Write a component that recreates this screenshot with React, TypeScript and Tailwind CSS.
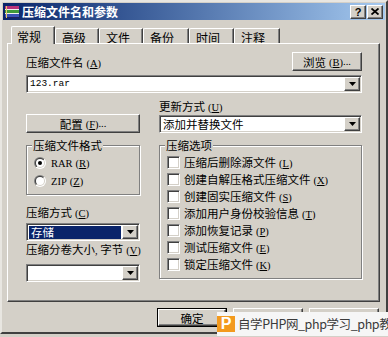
import React from "react";

const raised =
  "border border-t-white border-l-white border-r-[#404040] border-b-[#404040] shadow-[inset_-1px_-1px_0_#808080]";
const sunken =
  "border border-t-[#808080] border-l-[#808080] border-r-white border-b-white shadow-[inset_1px_1px_0_#404040,inset_-1px_-1px_0_#d4d0c8]";

function Lat({ children }: { children: React.ReactNode }) {
  return <span className="font-['Liberation_Serif'] text-[10.5px]">{children}</span>;
}

function Mn({ k }: { k: string }) {
  return (
    <span className="ml-[3px]">
      <Lat>
        (<u>{k}</u>)
      </Lat>
    </span>
  );
}

function Tri() {
  return (
    <svg width="7" height="4" viewBox="0 0 7 4">
      <polygon points="0,0 7,0 3.5,4" fill="#000" />
    </svg>
  );
}

function Combo({ text, sel, mono }: { text?: string; sel?: boolean; mono?: boolean }) {
  return (
    <div className={`flex h-[18px] w-full p-[1px] bg-white ${sunken}`}>
      <div className="flex-1 flex items-center overflow-hidden">
        {sel ? (
          <span className="ml-[1px] mr-[1px] flex-1 h-[13px] leading-[13px] bg-[#0a246a] text-white pl-[2px]">
            {text}
          </span>
        ) : mono ? (
          <span className="pl-[2px] font-['Liberation_Mono'] text-[9.5px]">{text}</span>
        ) : (
          <span className="pl-[2px]">{text}</span>
        )}
      </div>
      <div className={`w-[16px] h-full flex items-center justify-center bg-[#d4d0c8] ${raised}`}>
        <Tri />
      </div>
    </div>
  );
}

function Btn({ children, className = "", def }: { children: React.ReactNode; className?: string; def?: boolean }) {
  if (def) {
    return (
      <div className={`border border-black ${className}`}>
        <div className={`w-full h-full flex items-center justify-center ${raised}`}>{children}</div>
      </div>
    );
  }
  return <div className={`flex items-center justify-center ${raised} ${className}`}>{children}</div>;
}

function Radio({ on }: { on?: boolean }) {
  return (
    <svg width="12" height="12" viewBox="0 0 12 12">
      <defs>
        <linearGradient id="rgo" x1="0" y1="0" x2="1" y2="1">
          <stop offset="0.5" stopColor="#808080" />
          <stop offset="0.5" stopColor="#ffffff" />
        </linearGradient>
        <linearGradient id="rgi" x1="0" y1="0" x2="1" y2="1">
          <stop offset="0.5" stopColor="#404040" />
          <stop offset="0.5" stopColor="#d4d0c8" />
        </linearGradient>
      </defs>
      <circle cx="6" cy="6" r="6" fill="url(#rgo)" />
      <circle cx="6" cy="6" r="5" fill="url(#rgi)" />
      <circle cx="6" cy="6" r="4" fill="#fff" />
      {on && <circle cx="6" cy="6" r="2" fill="#000" />}
    </svg>
  );
}

function Check() {
  return <div className={`w-[13px] h-[13px] bg-white shrink-0 ${sunken}`} />;
}

function Group({ title, className = "", children }: { title: string; className?: string; children: React.ReactNode }) {
  return (
    <div className={`mt-[7px] flex flex-col border border-[#808080] shadow-[1px_1px_0_#fff,inset_1px_1px_0_#fff] ${className}`}>
      <span className="-mt-[8px] ml-[5px] px-[1px] w-fit leading-[14px] bg-[#d4d0c8]">{title}</span>
      {children}
    </div>
  );
}

function RarIcon() {
  return (
    <svg width="16" height="16" viewBox="0 0 16 16">
      <rect x="1" y="2" width="14" height="3" fill="#b8327a" />
      <rect x="1" y="5" width="14" height="1" fill="#f0f0f0" />
      <rect x="1" y="6" width="14" height="3" fill="#3f9a3c" />
      <rect x="1" y="9" width="14" height="1" fill="#f0f0f0" />
      <rect x="1" y="10" width="14" height="3" fill="#3a52b8" />
      <rect x="1" y="13" width="14" height="1" fill="#202060" />
      <rect x="2" y="2" width="1" height="12" fill="#e8c86a" />
    </svg>
  );
}

const tabs: [string, number][] = [
  ["常规", 44],
  ["高级", 44],
  ["文件", 44],
  ["备份", 46],
  ["时间", 45],
  ["注释", 46],
];

const options: [string, string][] = [
  ["压缩后删除源文件", "L"],
  ["创建自解压格式压缩文件", "X"],
  ["创建固实压缩文件", "S"],
  ["添加用户身份校验信息", "T"],
  ["添加恢复记录", "P"],
  ["测试压缩文件", "E"],
  ["锁定压缩文件", "K"],
];

export default function App() {
  return (
    <div className="relative w-[388px] h-[337px] overflow-hidden bg-[#d4d0c8] text-black text-[11.5px] leading-[14px] font-['Noto_Sans_CJK_SC',sans-serif]">
      <div className="w-[388px] h-[334px] border-2 border-t-[#e8e6e1] border-l-[#e8e6e1] border-r-[#404040] border-b-[#404040] p-[1px] flex flex-col">
        {/* title bar */}
        <div className="h-[17px] flex items-center bg-linear-to-r from-[#0a246a] to-[#a6caf0] pl-[1px] pr-[2px]">
          <RarIcon />
          <span className="ml-[2px] text-white font-bold text-[12px] leading-[16px] flex-1">压缩文件名和参数</span>
          <div className={`w-[16px] h-[14px] bg-[#d4d0c8] flex items-center justify-center text-[11px] font-bold font-['Liberation_Sans'] ${raised}`}>
            ?
          </div>
          <div className={`ml-[1px] w-[16px] h-[14px] bg-[#d4d0c8] flex items-center justify-center ${raised}`}>
            <svg width="8" height="7" viewBox="0 0 8 7">
              <path d="M0.5 0.5 L7.5 6.5 M7.5 0.5 L0.5 6.5" stroke="#000" strokeWidth="1.8" />
            </svg>
          </div>
        </div>

        {/* tabs */}
        <div className="mt-[6px] ml-[4px] pl-[4px] h-[17px] flex items-end text-[12px]">
          {tabs.map(([t, w], i) =>
            i === 0 ? (
              <div
                key={t}
                style={{ width: w }}
                className="relative z-10 -mb-[1px] h-[18px] pl-[5px] pt-[3px] bg-[#d4d0c8] border-t border-l border-r border-t-white border-l-white border-r-[#404040] shadow-[inset_-1px_0_0_#808080] rounded-tl-[2px]"
              >
                {t}
              </div>
            ) : (
              <div
                key={t}
                style={{ width: w }}
                className="h-[15px] pl-[6px] pt-[2px] border-t border-l border-r border-t-white border-l-white border-r-[#404040] shadow-[inset_-1px_0_0_#808080] rounded-tl-[2px]"
              >
                {t}
              </div>
            )
          )}
        </div>

        {/* panel */}
        <div className="ml-[4px] w-[373px] h-[259px] border border-t-white border-l-white border-r-[#404040] border-b-[#404040] shadow-[inset_-1px_-1px_0_#808080] pt-[8px] pl-[18px] pr-[17px]">
          <div className="flex items-end justify-between">
            <span>
              压缩文件名
              <Mn k="A" />
            </span>
            <Btn className="w-[70px] h-[19px]">
              浏览<Mn k="B" />
              <Lat>...</Lat>
            </Btn>
          </div>
          <div className="mt-[4px]">
            <Combo text="123.rar" mono />
          </div>

          <div className="mt-[6px] flex gap-[19px]">
            <div className="w-[114px] flex flex-col justify-end">
              <Btn className="w-full h-[19px]">
                配置<Mn k="F" />
                <Lat>...</Lat>
              </Btn>
            </div>
            <div className="w-[203px] flex flex-col">
              <span>
                更新方式
                <Mn k="U" />
              </span>
              <Combo text="添加并替换文件" />
            </div>
          </div>

          <div className="mt-[5px] flex gap-[19px] items-start">
            <div className="w-[114px] flex flex-col">
              <Group title="压缩文件格式" className="pb-[4px]">
                <div className="mt-[2px] pl-[7px] flex flex-col">
                  <div className="h-[18px] flex items-center gap-[5px]">
                    <Radio on />
                    <span>
                      <Lat>RAR</Lat>
                      <Mn k="R" />
                    </span>
                  </div>
                  <div className="h-[18px] flex items-center gap-[5px]">
                    <Radio />
                    <span>
                      <Lat>ZIP</Lat>
                      <Mn k="Z" />
                    </span>
                  </div>
                </div>
              </Group>
              <span className="mt-[10px]">
                压缩方式
                <Mn k="C" />
              </span>
              <div className="mt-[2px]">
                <Combo text="存储" sel />
              </div>
              <span className="mt-[1px] whitespace-nowrap">
                压缩分卷大小<Lat>, </Lat>字节
                <Mn k="V" />
              </span>
              <div className="mt-[6px]">
                <Combo />
              </div>
            </div>

            <Group title="压缩选项" className="w-[203px] h-[134px]">
              <div className="mt-[2px] pl-[7px] flex flex-col">
                {options.map(([t, k]) => (
                  <div key={k} className="h-[17px] flex items-center gap-[4px] whitespace-nowrap">
                    <Check />
                    <span>
                      {t}
                      <Mn k={k} />
                    </span>
                  </div>
                ))}
              </div>
            </Group>
          </div>
        </div>

        {/* bottom buttons */}
        <div className="mt-[6px] pr-[6px] flex justify-end gap-[6px]">
          <Btn def className="w-[70px] h-[19px]">
            确定
          </Btn>
          <Btn className="w-[70px] h-[19px]">取消</Btn>
          <Btn className="w-[70px] h-[19px]">帮助</Btn>
        </div>
      </div>

      {/* watermark overlay */}
      <div className="absolute left-[217px] top-[312px] w-[171px] h-[24px] bg-[#f6f6f6] flex items-center overflow-hidden">
        <div className="w-[18px] h-[16px] bg-[#f39a1e] flex items-center justify-center shrink-0">
          <span className="text-white font-bold text-[16px] leading-none font-['Liberation_Sans']">P</span>
        </div>
        <span className="ml-[3px] text-[12.5px] tracking-[-0.4px] leading-[18px] text-[#3a3a3a] whitespace-nowrap">
          自学PHP网_php学习_php教
        </span>
      </div>
    </div>
  );
}
